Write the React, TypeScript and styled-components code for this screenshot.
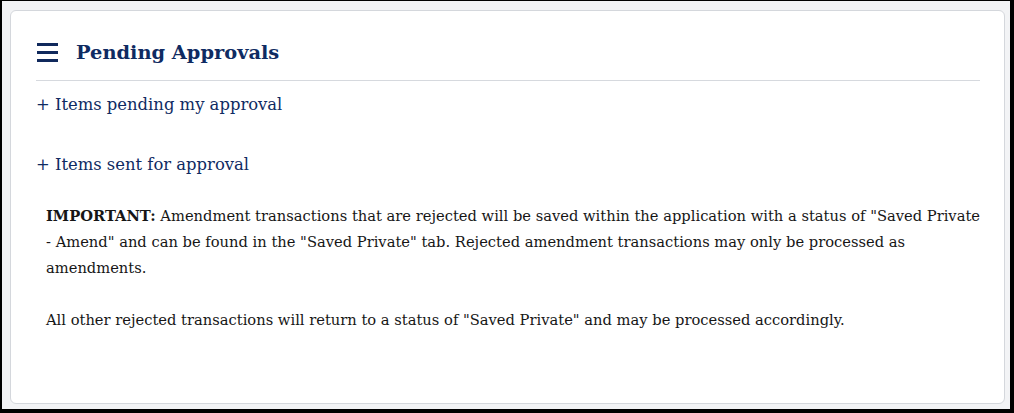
import React from "react";
import styled, { createGlobalStyle } from "styled-components";

const Global = createGlobalStyle`
  html, body { margin: 0; padding: 0; background: #000; }
  body { width: 1014px; height: 413px; overflow: hidden; }
  * { box-sizing: border-box; }
`;

const Frame = styled.div`
  margin: 1px 4px 0 2px;
  height: 408px;
  background: #f2f3f5;
  padding: 9px 5px 5px 8px;
  display: flex;
`;

const Card = styled.section`
  flex: 1;
  background: #fff;
  border: 1px solid #d4d7dc;
  border-radius: 6px;
  padding: 0 24px 0 25px;
  font-family: "DejaVu Serif", Georgia, serif;
  display: flex;
  flex-direction: column;
`;

const Header = styled.header`
  display: flex;
  align-items: center;
  gap: 18px;
  height: 70px;
  padding: 14px 0 0 1px;
  border-bottom: 1px solid #d6d9de;
`;

const Burger = styled.span`
  display: flex;
  flex-direction: column;
  gap: 5px;
  width: 21px;
  & > i {
    display: block;
    height: 3px;
    background: #10295c;
  }
`;

const Title = styled.h2`
  margin: 0;
  font-size: 19.4px;
  font-weight: 700;
  color: #0f2b62;
`;

const Toggle = styled.div<{ $first?: boolean }>`
  display: flex;
  align-items: center;
  height: 60px;
  padding-left: 0;
  font-size: 16.4px;
  color: #0f2b62;
  margin-top: ${(p) => (p.$first ? "-7px" : "0")};
`;

const Notice = styled.div`
  padding: 0 0 0 10px;
  margin: 9px -8px 0 0;
  font-size: 14.7px;
  line-height: 26px;
  color: #161616;
  & p { margin: 0 0 26px 0; }
  & b { font-weight: 700; }
`;

export default function App() {
  return (
    <>
      <Global />
      <Frame>
        <Card>
          <Header>
            <Burger>
              <i />
              <i />
              <i />
            </Burger>
            <Title>Pending Approvals</Title>
          </Header>
          <Toggle $first>+ Items pending my approval</Toggle>
          <Toggle>+ Items sent for approval</Toggle>
          <Notice>
            <p>
              <b>IMPORTANT:</b> Amendment transactions that are rejected will be saved
              within the application with a status of "Saved Private - Amend" and can be
              found in the "Saved Private" tab. Rejected amendment transactions may only
              be processed as amendments.
            </p>
            <p>
              All other rejected transactions will return to a status of "Saved Private"
              and may be processed accordingly.
            </p>
          </Notice>
        </Card>
      </Frame>
    </>
  );
}
